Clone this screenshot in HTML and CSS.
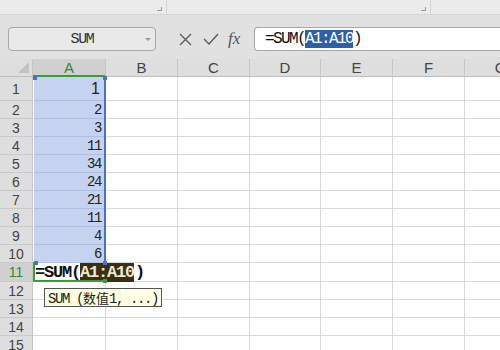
FILE: index.html
```html
<!DOCTYPE html>
<html lang="zh-CN">
<head>
    <meta charset="UTF-8">
    <title>SUM</title>
    <link rel="stylesheet" href="styles.css">
</head>
<body>
<div class="topbar">
    <div class="tb-cell first"><span class="mark"></span></div>
    <div class="tb-cell second"><span class="mark"></span></div>
</div>
<div class="toolbar">
    <div class="namebox">SUM<span class="drop"></span></div>
    <div class="tools">
        <svg class="icon-x" width="13" height="13" viewBox="0 0 13 13"><path d="M1 1 L12 12 M12 1 L1 12" stroke="#5a5a5a" stroke-width="1.3" fill="none"/></svg>
        <svg class="icon-ok" width="16" height="12" viewBox="0 0 16 12"><path d="M1 6 L6 11 L15 1" stroke="#5a5a5a" stroke-width="1.4" fill="none"/></svg>
        <span class="fx">fx</span>
    </div>
    <div class="formula">=SUM(<span class="hl">A1:A10</span>)</div>
</div>
<div class="sheet" id="sheet">
    <div class="range"><span class="h tl"></span><span class="h tr"></span><span class="h bl"></span><span class="h br"></span></div>
    <div class="active"><span class="handle"></span></div>
    <div class="tip">SUM (<span class="cjk">数值</span>1, ...)</div>
</div>
<script>
    const cols = ['A', 'B', 'C', 'D', 'E', 'F', 'G'];
    const vals = [1, 2, 3, 11, 34, 24, 21, 11, 4, 6];
    const sheet = document.getElementById('sheet');
    let html = '<div class="hd corner"><svg width="11" height="11" viewBox="0 0 11 11"><path d="M11 0 L11 11 L0 11 Z" fill="#c2c2c2"/></svg></div>';

    cols.forEach(c => {
        html += `<div class="hd${c === 'A' ? ' cur' : ''}">${c}</div>`;
    });

    for (let r = 1; r <= 15; r++) {
        html += `<div class="rh${r === 11 ? ' cur' : ''}">${r}</div>`;
        cols.forEach(c => {
            if (c === 'A' && r <= 10) {
                html += `<div class="cell sel${r === 1 ? ' big' : ''}">${vals[r - 1]}</div>`;
            } else if (c === 'A' && r === 11) {
                html += '<div class="cell edit">=SUM(<span class="ref">A1:A10</span><span class="caret"></span>)</div>';
            } else {
                html += '<div class="cell"></div>';
            }
        });
    }
    sheet.insertAdjacentHTML('afterbegin', html);
</script>
</body>
</html>
```
FILE: styles.css
```css
body {
    margin: 0;
    width: 500px;
    height: 350px;
    overflow: hidden;
    background: #fff;
    font-family: "Liberation Sans", Arial, sans-serif;
}

/* top strip */
.topbar {
    display: flex;
    height: 14px;
    background: #ebebeb;
    border-bottom: 1px solid #d6d6d6;
}
.tb-cell {
    position: relative;
    border-right: 1px solid #d2d2d2;
}
.tb-cell.first { width: 166px; }
.tb-cell.second { width: 263px; }
.mark {
    position: absolute;
    right: 4px;
    top: 7px;
    width: 4px;
    height: 3px;
    border-right: 1px solid #9a9a9a;
    border-bottom: 1px solid #9a9a9a;
}

/* formula bar */
.toolbar {
    display: flex;
    align-items: flex-start;
    height: 44px;
    padding-top: 12px;
    box-sizing: border-box;
    background: #e1e1e1;
}
.namebox {
    position: relative;
    display: flex;
    align-items: center;
    justify-content: center;
    width: 148px;
    height: 24px;
    margin-left: 8px;
    box-sizing: border-box;
    border: 1px solid #a8a8a8;
    border-radius: 4px;
    background: #e9e9e9;
    font-family: "Liberation Mono", monospace;
    font-size: 15px;
    letter-spacing: -1.3px;
    color: #333;
}
.drop {
    position: absolute;
    right: 4px;
    top: 10px;
    border-left: 3px solid transparent;
    border-right: 3px solid transparent;
    border-top: 3px solid #9a9a9a;
}
.tools {
    display: flex;
    align-items: center;
    width: 98px;
    height: 24px;
}
.icon-x { margin-left: 23px; }
.icon-ok { margin-left: 11px; }
.fx {
    margin-left: 9px;
    font-family: "Liberation Serif", serif;
    font-style: italic;
    font-size: 17px;
    color: #555;
}
.formula {
    flex: 1;
    height: 24px;
    box-sizing: border-box;
    padding-left: 10px;
    border: 1px solid #a8a8a8;
    border-right: none;
    border-radius: 4px 0 0 4px;
    background: #fff;
    font-family: "Liberation Mono", monospace;
    font-size: 16px;
    letter-spacing: -1.6px;
    line-height: 22px;
    color: #111;
}
.hl {
    background: #2f5fa8;
    color: #fff;
}

/* sheet */
.sheet {
    position: relative;
    display: grid;
    grid-template-columns: 33px 73px 72px 72px 71px 72px 72px 72px;
    grid-template-rows: 18px 24px repeat(9, 18px) 19px repeat(4, 18px);
    background: #fff;
}
.hd {
    display: flex;
    align-items: center;
    justify-content: center;
    box-sizing: border-box;
    background: #dedede;
    border-right: 1px solid #c6c6c6;
    border-bottom: 1px solid #bdbdbd;
    font-size: 15px;
    color: #444;
}
.hd.corner {
    justify-content: flex-end;
    align-items: flex-end;
    padding: 0 3px 3px 0;
}
.hd.cur {
    background: #d0d0d0;
    color: #2e8b3a;
    border-bottom: 2px solid #3c9c3c;
}
.rh {
    display: flex;
    align-items: center;
    justify-content: center;
    box-sizing: border-box;
    background: #dedede;
    border-right: 1px solid #c6c6c6;
    border-bottom: 1px solid #cacaca;
    font-size: 14px;
    color: #444;
}
.rh.cur {
    background: #d0d0d0;
    color: #2e8b3a;
}
.cell {
    display: flex;
    align-items: center;
    box-sizing: border-box;
    border-right: 1px solid #d9d9d9;
    border-bottom: 1px solid #d9d9d9;
    white-space: nowrap;
}
.cell.sel {
    justify-content: flex-end;
    padding-right: 4px;
    background: #c5d3f0;
    border-color: #b0bfdf;
    font-family: "Liberation Mono", monospace;
    font-size: 14px;
    letter-spacing: -1.4px;
    color: #222;
}
.cell.sel.big {
    font-family: "Liberation Sans", Arial, sans-serif;
    font-size: 16px;
    letter-spacing: 0;
    padding-right: 5px;
}
.cell.edit {
    padding-left: 2px;
    font-family: "Liberation Mono", monospace;
    font-weight: bold;
    font-size: 17px;
    letter-spacing: -1.2px;
    color: #111;
}
.ref {
    position: relative;
    background: #3a2f14;
    color: #efe7cf;
}
.caret {
    display: inline-block;
    width: 1px;
    height: 17px;
    margin-right: 1px;
    background: #000;
    vertical-align: middle;
}

/* overlays */
.range {
    position: absolute;
    left: 33px;
    top: 18px;
    width: 73px;
    height: 186px;
    box-sizing: border-box;
    border-left: 1px solid #fff;
    border-right: 2px solid #4a72c8;
}
.h {
    position: absolute;
    width: 4px;
    height: 4px;
    background: #4a72c8;
}
.h.tl { left: -1px; top: -1px; }
.h.tr { right: -3px; top: -1px; }
.h.bl { left: 0; bottom: -2px; }
.h.br { right: -3px; bottom: -2px; }
.active {
    position: absolute;
    left: 33px;
    top: 203px;
    width: 70px;
    height: 20px;
    box-sizing: border-box;
    border-left: 2px solid #3c9c3c;
    border-bottom: 2px solid #3c9c3c;
}
.handle {
    position: absolute;
    right: -4px;
    bottom: -3px;
    width: 4px;
    height: 4px;
    background: #3c9c3c;
}
.tip {
    position: absolute;
    left: 44px;
    top: 229px;
    height: 19px;
    padding: 0 3px;
    box-sizing: border-box;
    border: 1px solid #555;
    background: #ffffe1;
    font-family: "Liberation Mono", "Noto Sans CJK SC", monospace;
    font-size: 14px;
    letter-spacing: -1.4px;
    line-height: 17px;
    color: #222;
    white-space: nowrap;
}
.cjk {
    font-family: "Noto Sans CJK SC", sans-serif;
    font-size: 13px;
    letter-spacing: 0;
}
```
